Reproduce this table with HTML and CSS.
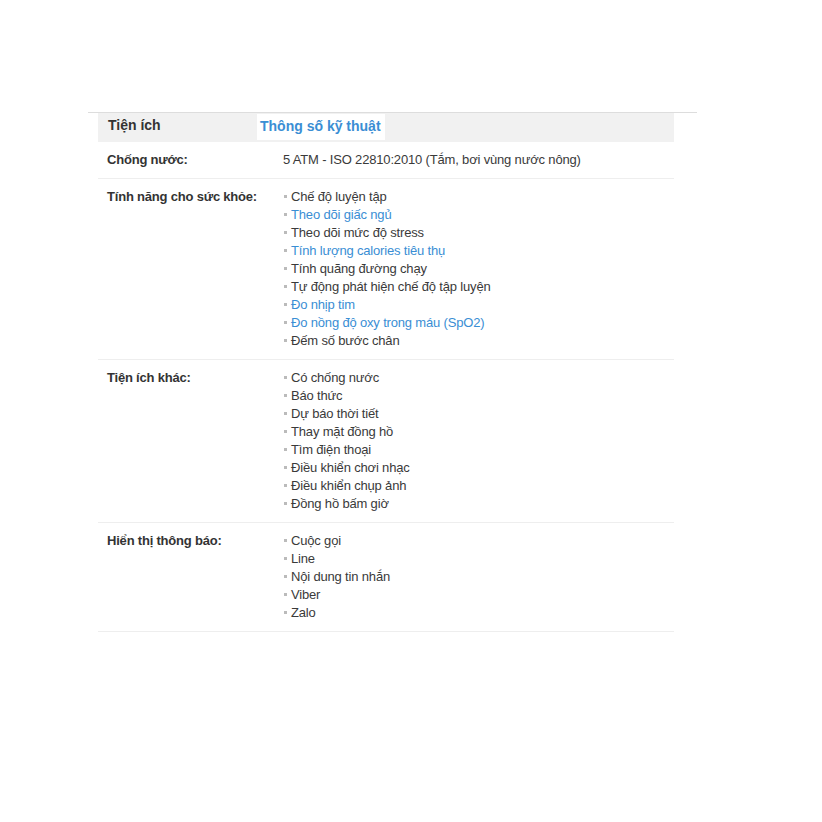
FILE: index.html
```html
<!DOCTYPE html>
<html>

<head>
    <meta name="viewport" content="width=device-width, initial-scale=1">
    <title>Thông số kỹ thuật</title>
    <link rel="stylesheet" href="styles.css">
</head>

<body>
    <div class="specs">
        <div class="specs-box">
            <div class="tabs">
                <span class="tab">Tiện ích</span>
                <span class="tab active">Thông số kỹ thuật</span>
            </div>

            <div class="row">
                <div class="label">Chống nước:</div>
                <div class="value">5 ATM - ISO 22810:2010 (Tắm, bơi vùng nước nông)</div>
            </div>

            <div class="row">
                <div class="label">Tính năng cho sức khỏe:</div>
                <ul class="value">
                    <li>Chế độ luyện tập</li>
                    <li><a href="#">Theo dõi giấc ngủ</a></li>
                    <li>Theo dõi mức độ stress</li>
                    <li><a href="#">Tính lượng calories tiêu thụ</a></li>
                    <li>Tính quãng đường chạy</li>
                    <li>Tự động phát hiện chế độ tập luyện</li>
                    <li><a href="#">Đo nhịp tim</a></li>
                    <li><a href="#">Đo nồng độ oxy trong máu (SpO2)</a></li>
                    <li>Đếm số bước chân</li>
                </ul>
            </div>

            <div class="row">
                <div class="label">Tiện ích khác:</div>
                <ul class="value">
                    <li>Có chống nước</li>
                    <li>Báo thức</li>
                    <li>Dự báo thời tiết</li>
                    <li>Thay mặt đồng hồ</li>
                    <li>Tìm điện thoại</li>
                    <li>Điều khiển chơi nhạc</li>
                    <li>Điều khiển chụp ảnh</li>
                    <li>Đồng hồ bấm giờ</li>
                </ul>
            </div>

            <div class="row">
                <div class="label">Hiển thị thông báo:</div>
                <ul class="value">
                    <li>Cuộc gọi</li>
                    <li>Line</li>
                    <li>Nội dung tin nhắn</li>
                    <li>Viber</li>
                    <li>Zalo</li>
                </ul>
            </div>
        </div>
    </div>
</body>

</html>
```

FILE: styles.css
```css
body {
    font-family: "Liberation Sans", Arial, Helvetica, sans-serif;
    margin: 0;
    padding: 0;
    background-color: #fff;
    color: #333;
    font-size: 13px;
}

.specs {
    margin: 112px 0 0 88px;
    width: 609px;
    border-top: 1px solid #ddd;
}

.specs-box {
    margin-left: 10px;
    width: 576px;
}

.tabs {
    display: flex;
    align-items: flex-start;
    height: 29px;
    background-color: #f1f1f1;
}

.tab {
    font-size: 14px;
    font-weight: bold;
    color: #333;
    padding: 4px 10px 0 10px;
    width: 139px;
}

.tab.active {
    width: auto;
    margin-top: 1px;
    height: 22px;
    padding: 4px 4px 0 3px;
    background-color: #fff;
    color: #3a8ed4;
}

.row {
    display: flex;
    padding: 9px 0 9px 0;
    border-bottom: 1px solid #eee;
    line-height: 18px;
}

.label {
    width: 176px;
    padding-left: 9px;
    font-weight: bold;
    color: #333;
    letter-spacing: -0.2px;
}

.value {
    margin: 0;
    padding: 0;
    list-style: none;
    color: #3a3a3a;
    letter-spacing: -0.17px;
}

.value li::before {
    content: "";
    display: inline-block;
    width: 3px;
    height: 3px;
    margin: 0 4px 3px 1px;
    background-color: #bbb;
    vertical-align: middle;
}

.value a {
    color: #3a8ed4;
    text-decoration: none;
}
```
